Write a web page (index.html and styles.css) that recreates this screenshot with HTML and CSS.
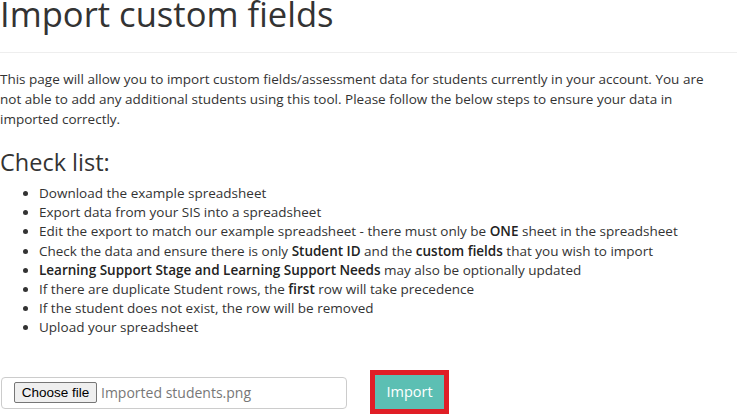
FILE: index.html
```html
<!DOCTYPE html>
<html>
<head>
<meta charset="utf-8">
<link rel="stylesheet" href="styles.css">
</head>
<body>
<div class="page">
  <h1 class="title">Import custom fields</h1>
  <p class="intro">This page will allow you to import custom fields/assessment data for students currently in your account. You are not able to add any additional students using this tool. Please follow the below steps to ensure your data in imported correctly.</p>
  <h2 class="subtitle">Check list:</h2>
  <ul class="checklist">
    <li>Download the example spreadsheet</li>
    <li>Export data from your SIS into a spreadsheet</li>
    <li>Edit the export to match our example spreadsheet - there must only be <b>ONE</b> sheet in the spreadsheet</li>
    <li>Check the data and ensure there is only <b>Student ID</b> and the <b>custom fields</b> that you wish to import</li>
    <li><b>Learning Support Stage and Learning Support Needs</b> may also be optionally updated</li>
    <li>If there are duplicate Student rows, the <b>first</b> row will take precedence</li>
    <li>If the student does not exist, the row will be removed</li>
    <li>Upload your spreadsheet</li>
  </ul>
  <div class="form-row">
    <div class="file-box">
      <span class="file-btn">Choose file</span>
      <span class="file-name">Imported students.png</span>
    </div>
    <div class="highlight">
      <button class="import-btn">Import</button>
    </div>
  </div>
</div>
</body>
</html>
```
FILE: styles.css
```css
html, body {
  margin: 0;
  padding: 0;
  background: #fff;
}
body {
  font-family: "Open Sans", "Liberation Sans", sans-serif;
  color: #333;
  font-size: 14px;
  width: 737px;
  height: 414px;
  overflow: hidden;
}
.page {
  padding: 0;
}
.title {
  margin: 0;
  font-size: 34.6px;
  font-weight: 400;
  line-height: 28px;
  padding-bottom: 24px;
  border-bottom: 1px solid #eee;
  color: #333;
}
.intro {
  margin: 16px 0 0 0;
  font-size: 13.5px;
  line-height: 20px;
  padding-right: 18px;
}
.subtitle {
  margin: 18px 0 0 0;
  font-size: 23.5px;
  font-weight: 400;
  line-height: 30px;
}
.checklist {
  margin: 7px 0 0 0;
  padding-left: 39px;
  font-size: 13.5px;
  line-height: 19.2px;
}
.checklist b {
  font-weight: 600;
  color: #222;
}
.form-row {
  display: flex;
  align-items: flex-start;
  margin-top: 32px;
}
.file-box {
  margin: 7px 0 0 1px;
  width: 346px;
  height: 32px;
  box-sizing: border-box;
  border: 1px solid #ccc;
  border-radius: 4px;
  display: flex;
  align-items: center;
  padding-left: 12px;
}
.file-btn {
  font-family: "Liberation Sans", Arial, sans-serif;
  font-size: 13.5px;
  color: #000;
  background: #efefef;
  border: 1px solid #767676;
  border-radius: 2px;
  height: 21px;
  box-sizing: border-box;
  width: 83px;
  display: flex;
  align-items: center;
  justify-content: center;
}
.file-name {
  margin-left: 4px;
  color: #777;
  font-size: 14px;
}
.highlight {
  margin-left: 23px;
  border: 5px solid #e01e26;
  border-bottom-width: 6px;
}
.import-btn {
  display: block;
  width: 69px;
  height: 34px;
  border: none;
  background: #5cbfb3;
  color: #fff;
  font-family: "Open Sans", sans-serif;
  font-size: 14.5px;
  padding: 0;
}
```
